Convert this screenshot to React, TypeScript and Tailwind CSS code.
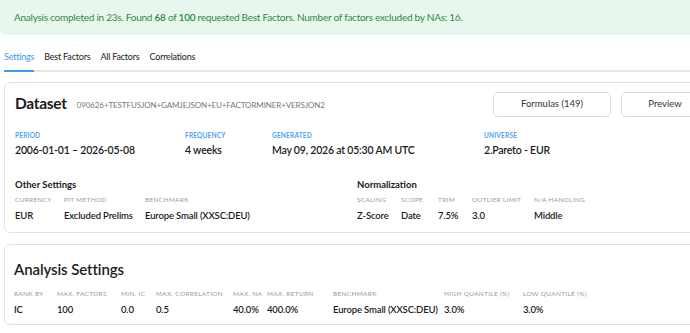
import React from "react";

const font = "font-['Source_Sans_Pro','Lato','Noto_Sans',sans-serif]";

type Field = { label: string; value: string; w?: string };

const overview: Field[] = [
  { label: "Period", value: "2006-01-01 – 2026-05-08" },
  { label: "Frequency", value: "4 weeks" },
  { label: "Generated", value: "May 09, 2026 at 05:30 AM UTC" },
  { label: "Universe", value: "2.Pareto - EUR" },
];

const otherSettings: Field[] = [
  { label: "Currency", value: "EUR", w: "w-[49px]" },
  { label: "PIT Method", value: "Excluded Prelims", w: "w-[81px]" },
  { label: "Benchmark", value: "Europe Small (XXSC:DEU)" },
];

const normalization: Field[] = [
  { label: "Scaling", value: "Z-Score", w: "w-[44px]" },
  { label: "Scope", value: "Date", w: "w-[37px]" },
  { label: "Trim", value: "7.5%", w: "w-[34px]" },
  { label: "Outlier Limit", value: "3.0", w: "w-[62px]" },
  { label: "N/A Handling", value: "Middle" },
];

const analysis: Field[] = [
  { label: "Rank By", value: "IC", w: "w-[43px]" },
  { label: "Max. Factors", value: "100", w: "w-[64px]" },
  { label: "Min. IC", value: "0.0", w: "w-[35px]" },
  { label: "Max. Correlation", value: "0.5", w: "w-[77px]" },
  { label: "Max. NA", value: "40.0%", w: "w-[34px]" },
  { label: "Max. Return", value: "400.0%", w: "w-[66px]" },
  { label: "Benchmark", value: "Europe Small (XXSC:DEU)", w: "w-[111px]" },
  { label: "High Quantile (%)", value: "3.0%", w: "w-[79px]" },
  { label: "Low Quantile (%)", value: "3.0%" },
];

const tabs = ["Settings", "Best Factors", "All Factors", "Correlations"];

export default function App() {
  return (
    <div className={`h-[333px] w-[690px] overflow-hidden bg-white text-[#1b1b1b] ${font}`}>
      <div className="w-[720px]">
        <div className="flex h-[35px] items-center rounded-b-[5px] bg-[#e7f7ed] pl-[14px] text-[10px] tracking-[-0.25px] text-[#2f8a45]">
          Analysis completed in 23s. Found&nbsp;<b className="font-semibold">68</b>&nbsp;of&nbsp;
          <b className="font-semibold">100</b>&nbsp;requested Best Factors. Number of factors excluded by NAs: 16.
        </div>

        <nav className="ml-[4px] mt-[15px] flex gap-[10px] border-b-2 border-[#e6e6e6] text-[9px] tracking-[-0.2px]">
          {tabs.map((t, i) => (
            <span
              key={t}
              className={
                i === 0
                  ? "-mb-[2px] border-b-2 border-[#3d9be9] pb-[6px] text-[#3d9be9]"
                  : "pb-[6px] text-[#222]"
              }
            >
              {t}
            </span>
          ))}
        </nav>

        <section className="ml-[4px] mt-[10px] rounded-[6px] border border-[#e2e2e2] px-[10px] pb-[8px] pt-[9px]">
          <div className="flex h-[25px] items-center">
            <h2 className="text-[15.5px] font-bold leading-none tracking-[-0.3px]">Dataset</h2>
            <span className="ml-[10px] mt-[2px] text-[8px] tracking-[-0.1px] text-[#777]">
              090626+TESTFUSJON+GAMJEJSON+EU+FACTORMINER+VERSJON2
            </span>
            <div className="ml-auto flex gap-[10px]">
              <Button className="w-[118px]">Formulas (149)</Button>
              <Button className="w-[88px]">Preview</Button>
            </div>
          </div>

          <div className="mt-[10px] grid grid-cols-[170px_87px_212px_1fr]">
            {overview.map((f) => (
              <div key={f.label}>
                <div className="pt-[3px] text-[6.5px] font-bold uppercase leading-[12px] tracking-[0.2px] text-[#4da3ef]">
                  {f.label}
                </div>
                <div className="text-[10.5px] font-semibold leading-[16px] tracking-[-0.2px]">{f.value}</div>
              </div>
            ))}
          </div>

          <div className="mt-[20px] grid grid-cols-[342px_1fr]">
            <Group title="Other Settings" fields={otherSettings} />
            <Group title="Normalization" fields={normalization} />
          </div>
        </section>

        <section className="ml-[4px] mt-[11px] rounded-[6px] border border-[#e2e2e2] px-[9px] pb-[6px] pt-[14px]">
          <h2 className="text-[15px] font-semibold leading-[20px] tracking-[-0.1px]">Analysis Settings</h2>
          <FieldRow fields={analysis} className="mt-[10px]" />
        </section>
      </div>
    </div>
  );
}

function Button({ children, className }: { children: React.ReactNode; className?: string }) {
  return (
    <button
      className={`flex h-[25px] items-center justify-center rounded-[5px] border border-[#dcdcdc] bg-white text-[9.5px] text-[#333] ${className ?? ""}`}
    >
      {children}
    </button>
  );
}

function Group({ title, fields }: { title: string; fields: Field[] }) {
  return (
    <div>
      <h3 className="text-[9.5px] font-bold leading-[14px]">{title}</h3>
      <FieldRow fields={fields} className="mt-[3px]" />
    </div>
  );
}

function FieldRow({ fields, className }: { fields: Field[]; className?: string }) {
  return (
    <div className={`flex ${className ?? ""}`}>
      {fields.map((f) => (
        <div key={f.label} className={`shrink-0 ${f.w ?? ""}`}>
          <div className="text-[6.5px] uppercase leading-[10px] tracking-[0.3px] text-[#9a9a9a]">{f.label}</div>
          <div className="mt-[3px] whitespace-nowrap text-[9.5px] font-semibold leading-[16px] tracking-[-0.15px]">
            {f.value}
          </div>
        </div>
      ))}
    </div>
  );
}
